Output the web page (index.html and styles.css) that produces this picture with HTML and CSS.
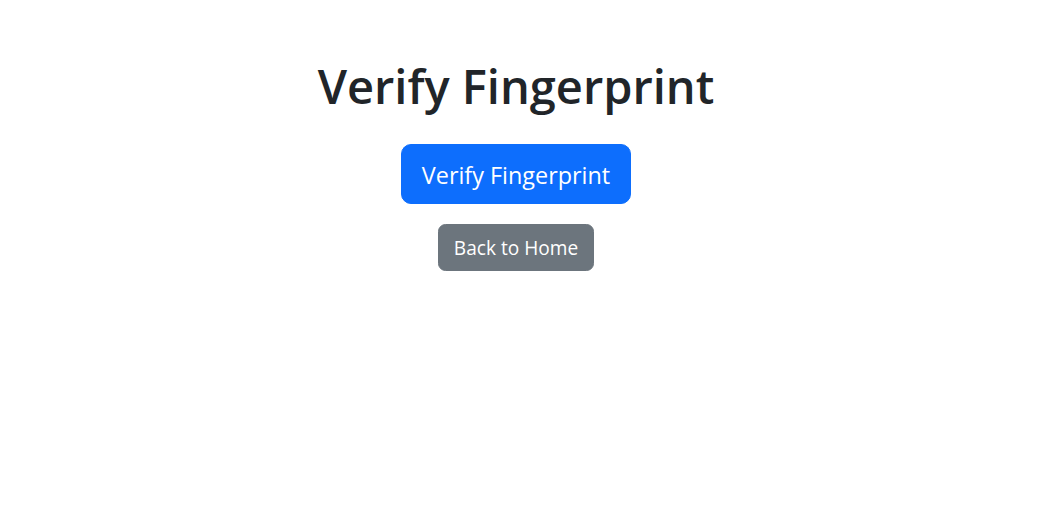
FILE: index.html
```html
<!DOCTYPE html>
<html lang="en">
<head>
<meta charset="utf-8">
<title>Verify Fingerprint</title>
<link rel="stylesheet" href="styles.css">
</head>
<body>
<main class="container">
  <h1 class="title">Verify Fingerprint</h1>
  <div class="actions">
    <button class="btn btn-primary" type="button">Verify Fingerprint</button>
    <a class="btn btn-secondary" href="#">Back to Home</a>
  </div>
</main>
</body>
</html>
```
FILE: styles.css
```css
html, body {
  margin: 0;
  padding: 0;
  background: #fff;
}
body {
  font-family: "Open Sans", "Noto Sans", sans-serif;
  color: #212529;
}
.container {
  padding: 60px 6px 0 0;
  display: flex;
  flex-direction: column;
  align-items: center;
}
.title {
  margin: 0 0 30px;
  font-size: 47px;
  font-weight: 600;
  line-height: 53px;
  padding-bottom: 1px;
}
.actions {
  display: flex;
  flex-direction: column;
  align-items: center;
  gap: 20px;
}
.btn {
  display: inline-block;
  font-family: inherit;
  color: #fff;
  text-decoration: none;
  border: 1.25px solid transparent;
  cursor: pointer;
}
.btn-primary {
  background: #0d6efd;
  border-color: #0d6efd;
  font-size: 23.4px;
  line-height: 37.5px;
  padding: 11.5px 20px 8.5px;
  border-radius: 10px;
}
.btn-secondary {
  background: #6c757d;
  border-color: #6c757d;
  font-size: 19.1px;
  line-height: 30px;
  padding: 8.5px 15px 6.5px;
  border-radius: 7.5px;
}
```
